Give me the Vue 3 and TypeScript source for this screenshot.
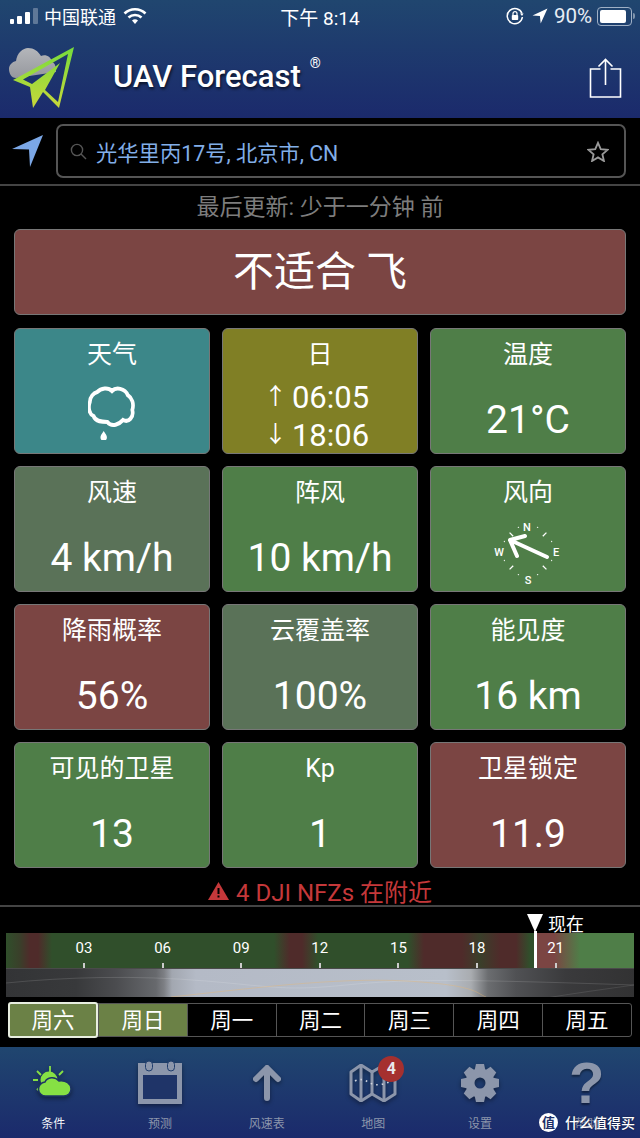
<template>
  <div class="page">
    <header class="top">
      <div class="status">
        <div class="status-left">
          <svg width="34" height="18" viewBox="0 0 34 18">
            <rect x="1" y="12" width="4" height="5" rx="1" fill="#fff" />
            <rect x="8" y="9" width="5" height="8" rx="1" fill="#fff" />
            <rect x="16" y="5" width="5" height="12" rx="1" fill="#fff" />
            <rect x="24" y="1" width="5" height="16" rx="1" fill="#5f7898" />
          </svg>
          <span class="carrier">中国联通</span>
          <svg width="24" height="18" viewBox="0 0 24 18" fill="none" stroke="#fff" stroke-width="2.6">
            <path d="M1.5 6.5a15 15 0 0 1 21 0" />
            <path d="M5.5 10.5a9.5 9.5 0 0 1 13 0" />
            <path d="M12 17l-3-3.4a4.4 4.4 0 0 1 6 0z" fill="#fff" stroke="none" />
          </svg>
        </div>
        <span class="clock">下午 8:14</span>
        <div class="status-right">
          <svg width="18" height="18" viewBox="0 0 18 18" fill="none" stroke="#fff" stroke-width="1.5">
            <path d="M16 6.5A7.6 7.6 0 1 0 16.4 10" />
            <path d="M14 6.5h3.6L16 9z" fill="#fff" stroke="none" />
            <rect x="5.8" y="8" width="6.4" height="5" rx=".8" fill="#fff" stroke="none" />
            <path d="M7 8V6.6a2 2 0 0 1 4 0V8" stroke-width="1.2" />
          </svg>
          <svg class="loc" width="16" height="16" viewBox="0 0 16 16"><path d="M15.5.5L.5 7.4l7.4.7.8 7.4z" fill="#fff" /></svg>
          <span class="pct">90%</span>
          <div class="battery"><div class="battery-fill"></div></div>
          <div class="battery-cap"></div>
        </div>
      </div>
      <div class="brand">
        <svg class="logo" width="70" height="64" viewBox="0 0 70 64">
          <defs>
            <linearGradient id="plane" x1="0" y1="0" x2="0" y2="1">
              <stop offset="0" stop-color="#76dc3c" />
              <stop offset="1" stop-color="#c8d83a" />
            </linearGradient>
            <linearGradient id="cloudfill" x1="0" y1="0" x2="0" y2="1">
              <stop offset="0" stop-color="#b4b6ba" />
              <stop offset="1" stop-color="#96989e" />
            </linearGradient>
          </defs>
          <path d="M8 32C3 32 1 27 1 23 1 19 4 16 8 15 9 7 15 2 20 2 26 2 30 5 33 10 38 8 43 11 44 16 47 17 48 20 48 26z" fill="url(#cloudfill)" />
          <path fill-rule="evenodd" d="M66 1L5 34 22 41 25 62 35 46 51 62zM60 8L15 33.500 24 38 52 17 37 44 50 56z" fill="url(#plane)" />
        </svg>
        <span class="title">UAV Forecast</span>
        <span class="reg">®</span>
        <svg class="share" width="34" height="42" viewBox="0 0 34 42" fill="none" stroke="#fff" stroke-width="1.6">
          <path d="M11.5 11H1.500v28h30V11H21.500" />
          <path d="M16.500 27V2M9.500 8.500l7-7 7 7" />
        </svg>
      </div>
    </header>

    <div class="search-row">
      <svg width="32" height="32" viewBox="0 0 32 32"><path d="M31 0L0 14 17 14.500 18 32z" fill="#7ba7e6" /></svg>
      <div class="search">
        <svg width="17" height="17" viewBox="0 0 17 17" fill="none" stroke="#555" stroke-width="1.4">
          <circle cx="7" cy="7" r="5.600" />
          <path d="M11 11l5 5" />
        </svg>
        <span class="place">光华里丙17号, 北京市, CN</span>
        <svg class="star" width="22" height="21" viewBox="0 0 24 23" fill="none" stroke="#999" stroke-width="2">
          <path d="M12 2l3 7 7.500.7-5.700 4.900 1.700 7.300L12 18l-6.500 3.900 1.700-7.300L1.500 9.700 9 9z" />
        </svg>
      </div>
    </div>

    <p class="updated">最后更新: 少于一分钟 前</p>
    <div class="verdict">不适合 飞</div>

    <section class="grid">
      <div v-for="c in cards" :key="c.label" class="card" :class="c.tone">
        <div class="label">{{ c.label }}</div>
        <div v-if="c.value" class="value">{{ c.value }}</div>
        <svg v-if="c.kind === 'cloud'" class="cloud" width="48" height="54" viewBox="0 0 52 54" preserveAspectRatio="none">
          <path d="M10 6C14 2 22 1 26 5 30 1 40 2 43 9 48 12 50 18 48 24 50 31 44 37 38 34 34 38 26 42 21 36 16 36 8 36 6 30 1 28 0 21 2 16 2 11 6 7 10 6z" fill="none" stroke="#fff" stroke-width="4" />
          <path d="M17 45c2 3 3.500 4.500 3.500 6.200a3.500 3.500 0 0 1-7 0c0-1.700 1.500-3.200 3.500-6.200z" fill="#fff" />
        </svg>
        <div v-if="c.kind === 'sun'" class="sun">
          <div><span class="arrow">↑</span>06:05</div>
          <div><span class="arrow">↓</span>18:06</div>
        </div>
        <svg v-if="c.kind === 'compass'" class="compass" width="70" height="70" viewBox="-35 -35 70 70">
          <g stroke="#fff" stroke-width="1.300">
            <path v-for="a in ticks" :key="a" :d="tickPath(a)" />
          </g>
          <g class="compass-letters" fill="#fff" text-anchor="middle">
            <text x="-1" y="-20">N</text>
            <text x="0" y="33">S</text>
            <text x="-29" y="5">W</text>
            <text x="28" y="5">E</text>
          </g>
          <path d="M19 6L-18-11M-3-15L-18-11-11 5" fill="none" stroke="#fff" stroke-width="4" stroke-linecap="round" stroke-linejoin="round" />
        </svg>
      </div>
    </section>

    <div class="warning">
      <svg width="21" height="18" viewBox="0 0 21 18">
        <path d="M10.500 0L21 18H0z" fill="#c5383a" />
        <rect x="9.500" y="6" width="2" height="6" fill="#000" />
        <rect x="9.500" y="13.500" width="2" height="2" fill="#000" />
      </svg>
      <span>4 DJI NFZs 在附近</span>
    </div>

    <section class="forecast">
      <div class="now-label">现在</div>
      <div class="strip">
        <div class="strip-top">
          <div v-for="h in hours" :key="h.text" class="hour" :style="{ left: h.left + 'px' }">
            <span>{{ h.text }}</span>
            <i></i>
          </div>
        </div>
        <div class="strip-low">
          <svg width="628" height="29" viewBox="0 0 628 29" fill="none">
            <path d="M0 14C60 8 130 6 200 12S280 22 340 16 450 10 628 16" stroke="#fff" stroke-opacity=".13" stroke-width="1" />
            <path d="M165 28C240 20 330 8 400 12S470 24 480 28" stroke="#e8b670" stroke-opacity=".4" stroke-width="1" />
            <path d="M540 29C570 24 600 20 628 16" stroke="#fff" stroke-opacity=".1" stroke-width="1" />
          </svg>
        </div>
        <div class="now-line"></div>
        <div class="now-tri"></div>
      </div>
      <div class="days">
        <div v-for="(d, i) in days" :key="d" class="day" :class="{ on: i < 2, picked: i === 0 }">{{ d }}</div>
      </div>
    </section>

    <nav class="tabs">
      <div v-for="t in tabs" :key="t.text" class="tab" :class="{ active: t.kind === 'cond' }">
        <div class="tab-icon">
          <svg v-if="t.kind === 'cond'" width="40" height="36" viewBox="0 0 40 36">
            <g stroke="#86e044" stroke-width="1.800">
              <path d="M17 1v6M4 6l4 4M30 6l-4 4M0 15h5M4 25l4-4" />
            </g>
            <circle cx="16" cy="15" r="8.500" fill="#86e044" />
            <path d="M13 31a7 7 0 0 1-1-14c2-5 10-6 14-1 7-1 12 3 12 8 0 4-3 7-7 7z" fill="#86e044" stroke="#1d3466" stroke-width="1.500" />
          </svg>
          <svg v-if="t.kind === 'cal'" width="44" height="43" viewBox="0 0 44 43">
            <rect x="0" y="2" width="44" height="41" fill="#8c96ab" />
            <rect x="5" y="14" width="34" height="24" fill="#1f3468" />
            <rect x="7.500" y="0" width="7" height="10" rx="3.500" fill="#8c96ab" stroke="#1f3c6c" stroke-width="1" />
            <rect x="29.500" y="0" width="7" height="10" rx="3.500" fill="#8c96ab" stroke="#1f3c6c" stroke-width="1" />
          </svg>
          <svg v-if="t.kind === 'up'" width="28" height="36" viewBox="0 0 28 36" fill="none" stroke="#8c96ab" stroke-width="6" stroke-linecap="round" stroke-linejoin="round">
            <path d="M14 33V4M3 14L14 3l11 11" />
          </svg>
          <svg v-if="t.kind === 'map'" width="48" height="38" viewBox="0 0 48 38" fill="none" stroke="#8c96ab" stroke-width="3">
            <path d="M2 8L12 1 23 8 35 1 46 8V30L35 37 23 30 12 37 2 30z" stroke-linejoin="round" />
            <path d="M12 1V37M23 8V30M35 1V37" />
            <path d="M6 17c6-3 10-1 15 2s12 2 19-1" stroke-width="1.600" stroke-dasharray="1.600 4" stroke="#cfd4de" />
          </svg>
          <svg v-if="t.kind === 'gear'" width="38" height="38" viewBox="-19 -19 38 38">
            <g fill="#8c96ab">
              <polygon v-for="a in gearTeeth" :key="a" points="-4,-19 4,-19 6,-10 -6,-10" :transform="`rotate(${a})`" />
            </g>
            <circle r="10" fill="none" stroke="#8c96ab" stroke-width="9" />
          </svg>
          <span v-if="t.kind === 'help'" class="help">?</span>
          <span v-if="t.kind === 'map'" class="badge">4</span>
        </div>
        <span class="tab-text">{{ t.text }}</span>
      </div>
    </nav>

    <div class="mark">
      <span class="mark-dot">值</span>
      <span>什么值得买</span>
    </div>
  </div>
</template>

<script setup lang="ts">
interface Card {
  label: string
  tone: string
  value?: string
  kind?: string
}

const cards: Card[] = [
  { label: '天气', tone: 'teal', kind: 'cloud' },
  { label: '日', tone: 'olive', kind: 'sun' },
  { label: '温度', tone: 'green', value: '21°C' },
  { label: '风速', tone: 'grey', value: '4 km/h' },
  { label: '阵风', tone: 'green', value: '10 km/h' },
  { label: '风向', tone: 'green', kind: 'compass' },
  { label: '降雨概率', tone: 'red', value: '56%' },
  { label: '云覆盖率', tone: 'grey', value: '100%' },
  { label: '能见度', tone: 'green', value: '16 km' },
  { label: '可见的卫星', tone: 'green', value: '13' },
  { label: 'Kp', tone: 'green', value: '1' },
  { label: '卫星锁定', tone: 'red', value: '11.9' }
]

const ticks = [22, 45, 68, 112, 135, 158, 202, 225, 248, 292, 315, 338]
function tickPath(a: number) {
  const r = (a * Math.PI) / 180
  const long = a % 45 === 0
  const r1 = long ? 21 : 25
  const r2 = 26
  const p = (n: number) => `${(Math.sin(r) * n).toFixed(1)} ${(-Math.cos(r) * n).toFixed(1)}`
  return `M${p(r1)}L${p(r2)}`
}

const hours = ['03', '06', '09', '12', '15', '18', '21'].map((text, i) => ({
  text,
  left: 78 + i * 78.6
}))

const days = ['周六', '周日', '周一', '周二', '周三', '周四', '周五']
const gearTeeth = [0, 45, 90, 135, 180, 225, 270, 315]

const tabs = [
  { text: '条件', kind: 'cond' },
  { text: '预测', kind: 'cal' },
  { text: '风速表', kind: 'up' },
  { text: '地图', kind: 'map' },
  { text: '设置', kind: 'gear' },
  { text: '帮助', kind: 'help' }
]
</script>

<style>
body {
  background: #000;
}
</style>

<style scoped>
.page {
  position: relative;
  width: 640px;
  height: 1138px;
  overflow: hidden;
  background: #000;
  color: #fff;
  font-family: Roboto, "Noto Sans CJK SC", sans-serif;
}

.top {
  height: 118px;
  background: linear-gradient(#20466f, #1b2a6c);
}

.status {
  height: 32px;
  display: flex;
  align-items: center;
  justify-content: space-between;
  padding: 0 5px 0 9px;
  font-size: 18px;
  position: relative;
}

.status-left,
.status-right {
  display: flex;
  align-items: center;
}

.carrier {
  margin: 0 7px 0 1px;
}

.clock {
  position: absolute;
  left: 0;
  right: 0;
  text-align: center;
  font-size: 19px;
}

.status-right .loc {
  margin: 0 6px 0 8px;
}

.pct {
  font-size: 20.500px;
  color: #e8edf4;
  margin-right: 5px;
}

.battery {
  width: 29px;
  height: 13px;
  border: 1px solid #9fb0c6;
  border-radius: 4px;
  padding: 2px;
  box-sizing: content-box;
}

.battery-fill {
  width: 26px;
  height: 100%;
  background: #fff;
  border-radius: 2px;
}

.battery-cap {
  width: 2px;
  height: 6px;
  margin-left: 1px;
  background: #7f94ad;
  border-radius: 0 2px 2px 0;
}

.brand {
  height: 86px;
  display: flex;
  align-items: center;
  padding-left: 8px;
}

.logo {
  margin-top: 6px;
}

.title {
  margin-left: 35px;
  margin-top: 2px;
  font-size: 31px;
  font-weight: 500;
  text-shadow: 1px 2px 3px #000a;
}

.reg {
  font-size: 14px;
  margin: -24px 0 0 9px;
}

.share {
  margin-left: auto;
  margin-right: 17px;
  margin-top: 7px;
}

.search-row {
  height: 66px;
  display: flex;
  align-items: center;
  gap: 12px;
  padding: 0 14px 0 12px;
  border-bottom: 2px solid #444;
}

.search {
  flex: 1;
  height: 54px;
  display: flex;
  align-items: center;
  box-sizing: border-box;
  border: 2px solid #555;
  border-radius: 7px;
  padding: 0 15px 0 12px;
}

.place {
  margin-left: 9px;
  font-size: 21.300px;
  color: #82aee8;
}

.star {
  margin-left: auto;
}

.updated {
  margin: 0;
  height: 43px;
  line-height: 43px;
  text-align: center;
  font-size: 23px;
  color: #7d7d7d;
}

.verdict {
  height: 86px;
  margin: 0 14px 13px;
  box-sizing: border-box;
  border: 1px solid #777;
  border-radius: 6px;
  background: #7b4543;
  font-size: 41px;
  line-height: 84px;
  text-align: center;
}

.grid {
  display: grid;
  grid-template-columns: repeat(3, 196px);
  grid-auto-rows: 126px;
  gap: 12px;
  padding: 0 14px;
}

.card {
  box-sizing: border-box;
  border: 1px solid #777;
  border-radius: 6px;
  text-align: center;
  overflow: hidden;
}

.teal { background: #3c8789; }
.olive { background: #807f25; }
.green { background: #4f7e48; }
.grey { background: #5a7258; }
.red { background: #7b4543; }

.label {
  margin-top: 9px;
  font-size: 25px;
  line-height: 34px;
}

.value {
  margin-top: 24px;
  font-size: 39px;
  line-height: 48px;
}

.cloud {
  display: block;
  margin: 14px auto 0;
}

.sun {
  margin-top: 7px;
  font-size: 31px;
  line-height: 38px;
  white-space: nowrap;
}

.arrow {
  display: inline-block;
  width: 28px;
  margin-left: -7px;
  font-family: "Noto Sans CJK SC", sans-serif;
  font-size: 23px;
  line-height: 30px;
  text-align: left;
  vertical-align: top;
}

.compass {
  display: block;
  margin: 6px auto 0;
}

.compass-letters {
  font-size: 11px;
  font-family: Roboto, sans-serif;
  font-weight: 500;
}

.warning {
  height: 39px;
  display: flex;
  align-items: center;
  justify-content: center;
  gap: 7px;
  font-size: 24px;
  color: #c5383a;
  border-bottom: 2px solid #444;
  box-sizing: border-box;
  padding-top: 8px;
}

.forecast {
  position: relative;
  padding: 26px 6px 0;
  height: 138px;
  box-sizing: border-box;
}

.now-label {
  position: absolute;
  left: 548px;
  top: 5px;
  font-size: 18px;
  line-height: 26px;
}

.strip {
  position: relative;
  width: 628px;
}

.strip-top {
  position: relative;
  height: 35px;
  background: linear-gradient(90deg,
    #304f2b 0, #3a3f2a 14px, #4f2b2a 24px, #4f2b2a 32px, #304f2b 46px,
    #304f2b 268px, #4f2b2a 284px, #4f2b2a 296px, #304f2b 312px,
    #304f2b 402px, #4f2b2a 418px, #4f2b2a 456px, #3a3f2a 474px, #4f2b2a 494px, #4f2b2a 510px, #304f2b 524px,
    #304f2b 529px, #7b4543 530px, #7b4543 548px, #4f7e48 574px, #4f7e48 628px);
}

.hour {
  position: absolute;
  top: 5px;
  width: 0;
  display: flex;
  flex-direction: column;
  align-items: center;
  font-size: 15px;
}

.hour span {
  line-height: 20px;
}

.hour i {
  display: block;
  flex: none;
  width: 2px;
  height: 5px;
  margin-top: 5px;
  background: #ccc;
}

.strip-low {
  height: 29px;
  border-top: 1px solid #4a4a4a;
  box-sizing: border-box;
  background: linear-gradient(90deg,
    #333436 0, #38393b 70px, #4b4c4f 110px, #67696d 150px, #7d7f84 158px, #a2a7b0 166px, #b4bac6 190px,
    #b8bfca 440px, #a9acb0 465px, #6b6d70 482px, #505154 510px, #3a3a3c 560px, #323233 628px);
  overflow: hidden;
}

.strip-low svg {
  display: block;
}

.now-line {
  position: absolute;
  left: 528px;
  top: -2px;
  width: 3px;
  height: 37px;
  background: #fff;
}

.now-tri {
  position: absolute;
  left: 521px;
  top: -19px;
  width: 0;
  height: 0;
  border-left: 8px solid transparent;
  border-right: 8px solid transparent;
  border-top: 18px solid #fff;
}

.days {
  display: flex;
  margin: 6px 2px 0;
  height: 34px;
  border: 1px solid #555;
  border-radius: 3px;
  box-sizing: border-box;
  width: 624px;
}

.day {
  flex: 1;
  font-size: 21.500px;
  line-height: 34px;
  text-align: center;
  border-left: 1px solid #555;
}

.day:first-child {
  border-left: 0;
}

.day.on {
  background: #6b8146;
}

.day.picked {
  flex: 0 0 90px;
  box-sizing: border-box;
  margin: -2px 0 -2px -1px;
  border: 2px solid #e8eee0;
  border-radius: 3px;
  line-height: 34px;
}

.tabs {
  position: absolute;
  left: 0;
  right: 0;
  bottom: 0;
  height: 91px;
  display: grid;
  grid-template-columns: repeat(6, 1fr);
  background: linear-gradient(#20466f, #1b2a6c);
}

.tab {
  display: flex;
  flex-direction: column;
  align-items: center;
  color: #8c96ab;
}

.tab-icon {
  position: relative;
  height: 55px;
  margin-top: 8px;
  display: flex;
  align-items: center;
  justify-content: center;
}

.tab-icon svg {
  filter: drop-shadow(0 2px 2px #0006);
}

.tab-text {
  margin-top: 6px;
  font-size: 12px;
  line-height: 16px;
}

.tab.active .tab-text {
  color: #f2f4f8;
}

.help {
  font-family: "Liberation Sans", sans-serif;
  font-size: 58px;
  font-weight: 700;
  line-height: 55px;
  text-shadow: 0 2px 2px #0006;
}

.badge {
  position: absolute;
  left: 29px;
  top: 1px;
  width: 26px;
  height: 26px;
  border-radius: 50%;
  background: #a5302f;
  color: #e8e8ee;
  font-size: 16px;
  font-weight: 700;
  line-height: 26px;
  text-align: center;
}

.mark {
  position: absolute;
  left: 539px;
  bottom: 6px;
  display: flex;
  align-items: center;
  gap: 7px;
  color: #fff;
  font-size: 14px;
  font-weight: 500;
  text-shadow: 0 0 2px #0008;
}

.mark-dot {
  width: 19px;
  height: 19px;
  border-radius: 50%;
  background: #fff;
  color: #1d2f68;
  font-size: 13px;
  font-weight: 700;
  line-height: 19px;
  text-align: center;
  text-shadow: none;
}
</style>
